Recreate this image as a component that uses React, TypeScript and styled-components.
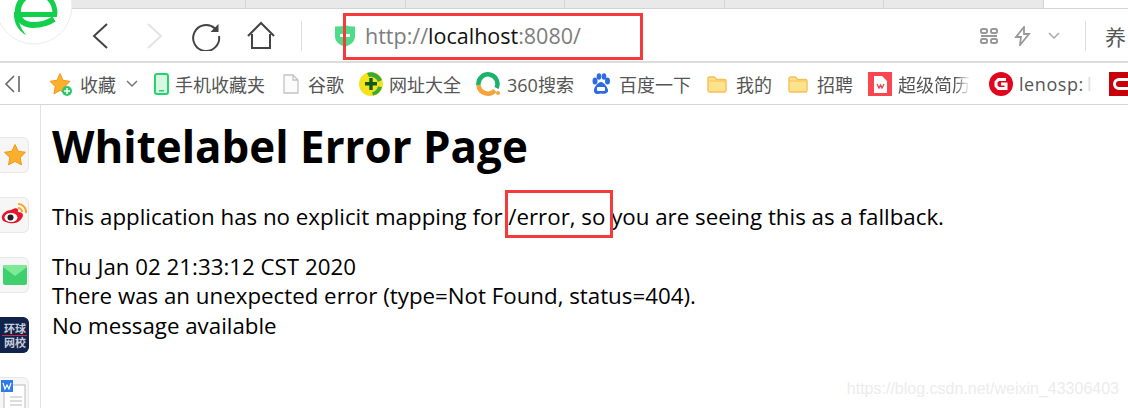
import styled, { createGlobalStyle } from "styled-components";

const Global = createGlobalStyle`
  html, body { margin: 0; padding: 0; background: #fff; }
  body { width: 1128px; height: 408px; overflow: hidden; font-family: "Open Sans", "Noto Sans CJK SC", sans-serif; }
  *, *::before, *::after { box-sizing: border-box; }
`;

const Page = styled.div`
  position: relative;
  width: 1128px;
  height: 408px;
  overflow: hidden;
  display: flex;
  flex-direction: column;
`;

const TabStrip = styled.div`
  display: flex;
  flex: 0 0 9px;
`;

const Tab = styled.div`
  width: 159.5px;
  background: #e9e9e9;
  border-bottom: 1px solid #d4d4d4;
  border-right: 1px solid #d4d4d4;

  &:first-child {
    width: 246px;
  }
`;

const TabRest = styled.div`
  flex: 1;
  border-bottom: 1px solid #d4d4d4;
`;

const Logo = styled.svg`
  position: absolute;
  left: 0;
  top: 0;
`;

const Toolbar = styled.div`
  flex: 0 0 54px;
  display: flex;
  align-items: center;
  padding: 2px 0 0 90px;
  border-bottom: 2px solid #dcdcdc;
`;

const NavButton = styled.svg<{ $gap: number }>`
  flex: none;
  margin-right: ${({ $gap }) => $gap}px;
`;

const Divider = styled.div<{ $gap: number }>`
  flex: none;
  width: 1px;
  height: 30px;
  background: #dedede;
  margin-right: ${({ $gap }) => $gap}px;
`;

const Shield = styled.svg`
  flex: none;
  margin-right: 9px;
`;

const Url = styled.div`
  position: relative;
  flex: none;
  width: 615px;
  font-size: 21.5px;
  color: #7d7d7d;
  white-space: nowrap;
  line-height: 30px;

  &::after {
    content: "";
    position: absolute;
    left: -22px;
    top: -8px;
    width: 300px;
    height: 47px;
    border: 3px solid #f43a3a;
  }
`;

const Host = styled.span`
  color: #111;
`;

const UserText = styled.span`
  font-family: "Noto Sans CJK SC", sans-serif;
  font-size: 21px;
  color: #555;
`;

const Bookmarks = styled.div`
  flex: 0 0 42px;
  display: flex;
  align-items: center;
  padding-left: 4px;
  border-bottom: 1px solid #d6d6d6;
  white-space: nowrap;
  overflow: hidden;
`;

const Mark = styled.div<{ $gap: number; $after?: number }>`
  display: flex;
  align-items: center;
  flex: none;
  gap: ${({ $gap }) => $gap}px;
  margin-right: ${({ $after = 16 }) => $after}px;
  font-family: "Open Sans", "Noto Sans CJK SC", sans-serif;
  font-size: 18px;
  color: #555;
`;

const Faded = styled.span<{ $width: number }>`
  display: block;
  width: ${({ $width }) => $width}px;
  overflow: hidden;
  -webkit-mask-image: linear-gradient(to right, #000 80%, transparent);
  mask-image: linear-gradient(to right, #000 80%, transparent);
`;

const Spaced = styled.span`
  letter-spacing: 0.6px;
`;

const FaintText = styled.span`
  color: #dddddd;
  margin-left: 3px;
`;

const Body = styled.div`
  flex: 1;
  display: flex;
  min-height: 0;
`;

const Sidebar = styled.div`
  flex: 0 0 41px;
  display: flex;
  flex-direction: column;
  gap: 24px;
  padding-top: 32px;
  border-right: 1px solid #e2e2e2;
`;

const SideTile = styled.div<{ $dark?: boolean }>`
  flex: none;
  width: 29px;
  height: 36px;
  display: flex;
  flex-direction: column;
  align-items: flex-end;
  justify-content: center;
  padding-right: 1px;
  border: 1px solid ${({ $dark }) => ($dark ? "#11234a" : "#e8e8e8")};
  border-left: none;
  border-radius: 0 6px 6px 0;
  background: ${({ $dark }) => ($dark ? "#11234a" : "#f6f6f6")};
  overflow: hidden;
`;

const DarkLine = styled.span<{ $rule?: boolean }>`
  display: block;
  width: 25px;
  font-family: "Noto Sans CJK SC", sans-serif;
  font-size: 11px;
  line-height: 13px;
  font-weight: 700;
  color: #c6cddc;
  text-align: right;
  padding-right: 1px;
  border-bottom: ${({ $rule }) => ($rule ? "1px solid #d2263c" : "none")};
`;

const Content = styled.main`
  padding-left: 11px;
  color: #000;
  font-size: 22.3px;
  line-height: 29.5px;
`;

const Title = styled.h1`
  margin: 13px 0 28px;
  font-size: 43.9px;
  line-height: 56px;
  font-weight: 700;
`;

const Paragraph = styled.div`
  margin-bottom: 20px;
  white-space: nowrap;
`;

const Boxed = styled.span`
  position: relative;

  &::after {
    content: "";
    position: absolute;
    left: -3px;
    right: -8px;
    top: -11px;
    bottom: -6px;
    border: 3px solid #f43a3a;
  }
`;

const Watermark = styled.div`
  position: absolute;
  right: 9px;
  bottom: 10px;
  font-family: "Liberation Sans", sans-serif;
  font-size: 16px;
  color: #ececec;
`;

const Star = () => (
  <svg width="24" height="24" viewBox="0 0 24 24">
    <path d="M12 1.500l3.200 6.800 7.300 1-5.300 5.200 1.300 7.400L12 18.400l-6.500 3.500 1.300-7.400L1.500 9.300l7.300-1z" fill="#fbb02c" stroke="#f3971c" strokeWidth="1" />
  </svg>
);

const Folder = () => (
  <svg width="20" height="18" viewBox="0 0 20 18">
    <path d="M1 3.500A1.500 1.500 0 0 1 2.500 2h5l2 2.500h8A1.500 1.500 0 0 1 19 6v9.500a1.500 1.500 0 0 1-1.500 1.500h-15A1.500 1.500 0 0 1 1 15.500z" fill="#ffe38c" stroke="#f6bf5a" strokeWidth="1.400" />
    <path d="M1.500 6h17" stroke="#f6bf5a" strokeWidth="1" />
  </svg>
);

export default function App() {
  return (
    <>
      <Global />
      <Page>
        <TabStrip>
          {Array.from({ length: 6 }).map((_, i) => (
            <Tab key={i} />
          ))}
          <TabRest />
        </TabStrip>

        <Toolbar>
          <NavButton $gap={27} width="24" height="30" viewBox="0 0 24 30" fill="none" stroke="#444" strokeWidth="2">
            <path d="M17 3L4 15l13 12" />
          </NavButton>
          <NavButton $gap={26} width="24" height="30" viewBox="0 0 24 30" fill="none" stroke="#e4e4e4" strokeWidth="2">
            <path d="M7 3l13 12L7 27" />
          </NavButton>
          <NavButton $gap={25} width="30" height="30" viewBox="0 0 30 30" fill="none" stroke="#444" strokeWidth="2">
            <path d="M24 7.500A13 13 0 1 0 28 15" />
            <path d="M27.500 3v8h-8z" fill="#444" stroke="none" />
          </NavButton>
          <NavButton $gap={25} width="30" height="30" viewBox="0 0 30 30" fill="none" stroke="#444" strokeWidth="2">
            <path d="M2 15L15 2l13 13M6 13v14h18V13" />
          </NavButton>
          <Divider $gap={32} />
          <Shield width="22" height="24" viewBox="0 0 22 24">
            <path d="M1 2.500Q6 3 11 1q5 2 10 1.500V13q0 6-10 10Q1 19 1 13z" fill="#4fdc88" />
            <rect x="6" y="10" width="10" height="3" fill="#fff" />
          </Shield>
          <Url>
            http://<Host>localhost</Host>:8080/
          </Url>
          <NavButton $gap={16} width="18" height="18" viewBox="0 0 18 18" fill="none" stroke="#999" strokeWidth="2">
            <rect x="1" y="2" width="6" height="4" rx="1.500" />
            <rect x="11" y="2" width="6" height="4" rx="1.500" />
            <path d="M1 9h16" />
            <rect x="1" y="12" width="6" height="4" rx="1.500" />
            <rect x="11" y="12" width="6" height="4" rx="1.500" />
          </NavButton>
          <NavButton $gap={15} width="18" height="20" viewBox="0 0 18 20" fill="none" stroke="#999" strokeWidth="1.800">
            <path d="M10 1L2 11h5l-1 8 9-11h-5z" />
          </NavButton>
          <NavButton $gap={24} width="14" height="10" viewBox="0 0 14 10" fill="none" stroke="#aaa" strokeWidth="1.500">
            <path d="M2 2l5 5 5-5" />
          </NavButton>
          <Divider $gap={19} />
          <UserText>养</UserText>
        </Toolbar>

        <Bookmarks>
          <Mark $gap={0} $after={29}>
            <svg width="16" height="18" viewBox="0 0 16 18" fill="none" stroke="#666" strokeWidth="1.600">
              <path d="M10 1L2 9l8 8M15 1v16" />
            </svg>
          </Mark>
          <Mark $gap={7} $after={10}>
            <svg width="24" height="24" viewBox="0 0 24 24">
              <path d="M11 1.500l3 6.800 7 1-5 5.200 1.200 7.400L11 18.400l-6 3.500 1.200-7.400L1 9.300l7-1z" fill="#fbb02c" stroke="#f3971c" />
              <circle cx="18" cy="19" r="5" fill="#2ec76e" />
              <path d="M18 16v6M15 19h6" stroke="#fff" strokeWidth="1.500" />
            </svg>
            收藏
          </Mark>
          <Mark $gap={0} $after={16}>
            <svg width="12" height="8" viewBox="0 0 12 8" fill="none" stroke="#777" strokeWidth="1.500">
              <path d="M1 1l5 5 5-5" />
            </svg>
          </Mark>
          <Mark $gap={6} $after={18}>
            <svg width="15" height="22" viewBox="0 0 15 22">
              <rect x="1" y="1" width="13" height="20" rx="2" fill="#d8f8e4" stroke="#27d36c" strokeWidth="2" />
              <rect x="5" y="17" width="5" height="1.500" fill="#27d36c" />
            </svg>
            手机收藏夹
          </Mark>
          <Mark $gap={9} $after={15}>
            <svg width="16" height="20" viewBox="0 0 16 20" fill="#fbfbfb" stroke="#c4c4c4" strokeWidth="1.300">
              <path d="M1 1h9l5 5v13H1zM10 1v5h5" />
            </svg>
            谷歌
          </Mark>
          <Mark $gap={6} $after={15}>
            <svg width="24" height="24" viewBox="0 0 24 24">
              <circle cx="12" cy="12" r="12" fill="#f6e21c" />
              <path d="M8 1a12 12 0 0 1 15 7l-4 2a8 8 0 0 0-9-5z" fill="#3aa83c" />
              <path d="M23 15a12 12 0 0 1-9 8.500l-1-3a9 9 0 0 0 6-6z" fill="#3aa83c" />
              <path d="M6 11.800h12M12 6v12" stroke="#0c5a1c" strokeWidth="3.400" />
            </svg>
            网址大全
          </Mark>
          <Mark $gap={7} $after={17}>
            <svg width="24" height="24" viewBox="0 0 24 24" fill="none" strokeWidth="4.500">
              <path d="M2.500 13A9.500 9.500 0 1 1 20.500 16" stroke="#19b36b" />
              <path d="M2.500 13A9.500 9.500 0 0 0 19 18.500" stroke="#f5a33c" />
              <circle cx="22" cy="21" r="2" fill="#f5a33c" stroke="none" />
            </svg>
            360搜索
          </Mark>
          <Mark $gap={8}>
            <svg width="20" height="22" viewBox="0 0 20 22" fill="#2c6be4">
              <ellipse cx="4" cy="8" rx="2.500" ry="3.500" />
              <ellipse cx="8" cy="3.500" rx="2.300" ry="3.200" />
              <ellipse cx="13" cy="3.500" rx="2.300" ry="3.200" />
              <ellipse cx="16.500" cy="8" rx="2.500" ry="3.500" />
              <path d="M10 9c-3 0-8 6-7 9.500S8 21 10 20.500c2 .5 6 .5 7-2S13 9 10 9z" />
              <rect x="6" y="14" width="8" height="4" rx="1" fill="#fff" />
            </svg>
            百度一下
          </Mark>
          <Mark $gap={9}>
            <Folder />
            我的
          </Mark>
          <Mark $gap={9} $after={15}>
            <Folder />
            招聘
          </Mark>
          <Mark $gap={6} $after={19}>
            <svg width="24" height="24" viewBox="0 0 24 24">
              <rect width="24" height="24" fill="#fa4650" />
              <path d="M6 4h8l5 5v12H6z" fill="#fff" />
              <path d="M9 12l2 4 1.500-3 1.500 3 2-4" fill="none" stroke="#f2404c" strokeWidth="1.300" />
            </svg>
            <Faded $width={72}>超级简历</Faded>
          </Mark>
          <Mark $gap={6} $after={18}>
            <svg width="24" height="24" viewBox="0 0 24 24">
              <circle cx="12" cy="12" r="12" fill="#e0061d" />
              <path d="M17 7.500H9.500L7 10v4l2.500 2.500H17V12h-5" fill="none" stroke="#fff" strokeWidth="3" />
            </svg>
            <span>
              <Spaced>lenosp:</Spaced>
              <FaintText>l</FaintText>
            </span>
          </Mark>
          <Mark $gap={0} $after={0}>
            <svg width="20" height="24" viewBox="0 0 20 24">
              <rect width="20" height="24" fill="#c8000a" />
              <path d="M20 7.500H10a4.500 4.500 0 0 0 0 9h10" fill="none" stroke="#fff" strokeWidth="3" />
            </svg>
          </Mark>
        </Bookmarks>

        <Body>
          <Sidebar>
            <SideTile>
              <Star />
            </SideTile>
            <SideTile>
              <svg width="26" height="24" viewBox="0 0 26 24">
                <path d="M10 7c5-3 8-2 7 2 5 0 6 3 4 6-3 5-9 6-13 5-5-1-8-3-7-7 1-3 5-6 9-6z" fill="#e6162d" />
                <ellipse cx="10" cy="14.500" rx="6.500" ry="4.500" fill="#fff" />
                <circle cx="9.500" cy="14.500" r="3" fill="#222" />
                <path d="M17 1a8 8 0 0 1 8 9M17 5a4 4 0 0 1 4 4" fill="none" stroke="#f5a623" strokeWidth="2" />
              </svg>
            </SideTile>
            <SideTile>
              <svg width="24" height="20" viewBox="0 0 24 20">
                <rect width="24" height="20" rx="2" fill="#3fcf6e" />
                <path d="M0 2q0-2 2-2h20q2 0 2 2L12 11z" fill="#7eea97" />
              </svg>
            </SideTile>
            <SideTile $dark>
              <DarkLine $rule>环球</DarkLine>
              <DarkLine>网校</DarkLine>
            </SideTile>
            <SideTile>
              <svg width="26" height="30" viewBox="0 0 26 30">
                <rect x="3" y="5" width="21" height="24" fill="#fff" stroke="#bbb" />
                <path d="M9 17h12M9 21h12M9 25h12" stroke="#bbb" />
                <rect x="0" y="0" width="12" height="12" fill="#2f7be8" />
                <path d="M2 3l2 6 2-4 2 4 2-6" fill="none" stroke="#fff" strokeWidth="1.200" />
              </svg>
            </SideTile>
          </Sidebar>
          <Content>
            <Title>Whitelabel Error Page</Title>
            <Paragraph>
              This application has no explicit mapping for <Boxed>/error, so</Boxed> you are seeing this as a fallback.
            </Paragraph>
            <Paragraph>
              Thu Jan 02 21:33:12 CST 2020
              <br />
              There was an unexpected error (type=Not Found, status=404).
              <br />
              No message available
            </Paragraph>
          </Content>
        </Body>

        <Logo width="80" height="50" viewBox="0 0 80 50">
          <circle cx="34" cy="6" r="38" fill="#fff" stroke="#ececec" />
          <path d="M24 -2C14 8 16 25 33 25C42 25 48 23 54 19" fill="none" stroke="#12d04c" strokeWidth="6" />
          <path d="M20 14.500H57" stroke="#12d04c" strokeWidth="5" />
          <path d="M46 -4C52 0 55 6 55 14" fill="none" stroke="#12d04c" strokeWidth="5" />
          <path d="M14 12C13 24 20 32 26 35C20 27 17 20 18 10z" fill="#12d04c" />
        </Logo>
        <Watermark>https://blog.csdn.net/weixin_43306403</Watermark>
      </Page>
    </>
  );
}
